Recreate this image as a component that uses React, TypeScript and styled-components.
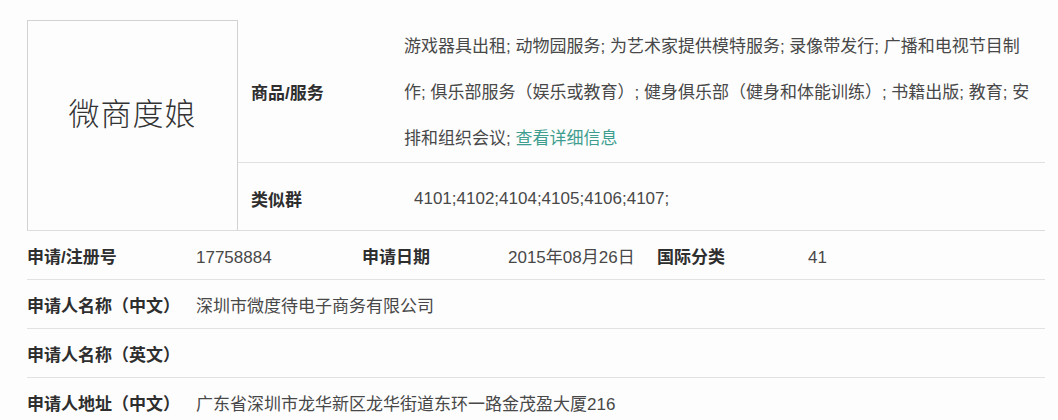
import React from "react";
import styled, { createGlobalStyle } from "styled-components";

const GlobalStyle = createGlobalStyle`
  body {
    margin: 0;
    background: #fdfdfd;
    font-family: "Liberation Sans", "Noto Sans CJK SC", sans-serif;
    color: #444;
  }
`;

const goods = [
  "游戏器具出租; 动物园服务; 为艺术家提供模特服务; 录像带发行; 广播和电视节目制",
  "作; 俱乐部服务（娱乐或教育）; 健身俱乐部（健身和体能训练）; 书籍出版; 教育; 安",
];

export default function App() {
  return (
    <Page>
      <GlobalStyle />
      <Card>
        <Top>
          <LogoBox>
            <LogoText>微商度娘</LogoText>
          </LogoBox>
          <Side>
            <GoodsRow>
              <SideLabel>商品/服务</SideLabel>
              <Goods>
                {goods.map(line => (
                  <GoodsLine key={line}>{line}</GoodsLine>
                ))}
                <GoodsLine>
                  排和组织会议; <Link>查看详细信息</Link>
                </GoodsLine>
              </Goods>
            </GoodsRow>
            <SimilarRow>
              <SideLabel>类似群</SideLabel>
              <Value indent={10}>4101;4102;4104;4105;4106;4107;</Value>
            </SimilarRow>
          </Side>
        </Top>
        <Row cols="169px 166px 146px 149px 151px 1fr">
          <Label>申请/注册号</Label>
          <Value>17758884</Value>
          <Label>申请日期</Label>
          <Value>2015年08月26日</Value>
          <Label>国际分类</Label>
          <Value>41</Value>
        </Row>
        <Row cols="169px 1fr">
          <Label>申请人名称（中文）</Label>
          <Value>深圳市微度待电子商务有限公司</Value>
        </Row>
        <Row cols="169px 1fr">
          <Label>申请人名称（英文）</Label>
          <Value />
        </Row>
        <Row cols="169px 1fr" last>
          <Label>申请人地址（中文）</Label>
          <Value>广东省深圳市龙华新区龙华街道东环一路金茂盈大厦216</Value>
        </Row>
      </Card>
    </Page>
  );
}

const Page = styled.div`
  padding: 20px 0 0 27px;
  height: 400px;
  overflow: hidden;
`;

const Card = styled.div`
  width: 1018px;
  font-size: 17px;
`;

const Top = styled.div`
  display: flex;
  border-bottom: 1px solid #dcdcdc;
`;

const LogoBox = styled.div`
  box-sizing: border-box;
  width: 211px;
  height: 210px;
  border: 1px solid #d2d2d2;
  border-bottom: none;
  display: flex;
  align-items: center;
  justify-content: center;
  padding-bottom: 28px;
`;

const LogoText = styled.span`
  font-family: "Noto Sans CJK SC", sans-serif;
  font-weight: 300;
  font-size: 31px;
  color: #333;
  letter-spacing: 1px;
`;

const Side = styled.div`
  flex: 1;
  display: flex;
  flex-direction: column;
`;

const GoodsRow = styled.div`
  display: flex;
  align-items: flex-start;
  height: 143px;
  box-sizing: border-box;
  border-bottom: 1px solid #e0e0e0;
`;

const SimilarRow = styled.div`
  display: flex;
  align-items: center;
  height: 66px;
  box-sizing: border-box;
  padding-top: 5px;
`;

const SideLabel = styled.div`
  box-sizing: border-box;
  align-self: center;
  width: 166px;
  padding-left: 13px;
  padding-top: 5px;
  line-height: 24px;
  font-weight: bold;
  color: #2e2e2e;
`;

const Goods = styled.div`
  display: flex;
  flex-direction: column;
  padding-top: 4px;
`;

const GoodsLine = styled.div`
  line-height: 46px;
  white-space: nowrap;
  color: #484848;
`;

const Link = styled.span`
  color: #3f9d8f;
`;

const Row = styled.div<{ cols: string; last?: boolean }>`
  display: grid;
  grid-template-columns: ${props => props.cols};
  align-items: center;
  box-sizing: border-box;
  height: 49px;
  padding-top: 5px;
  border-bottom: ${props => (props.last ? "none" : "1px solid #e2e2e2")};
`;

const Label = styled.div`
  line-height: 24px;
  font-weight: bold;
  color: #2e2e2e;
  white-space: nowrap;
`;

const Value = styled.div<{ indent?: number }>`
  padding-left: ${props => props.indent || 0}px;
  line-height: 24px;
  min-height: 24px;
  color: #484848;
  white-space: nowrap;
`;
